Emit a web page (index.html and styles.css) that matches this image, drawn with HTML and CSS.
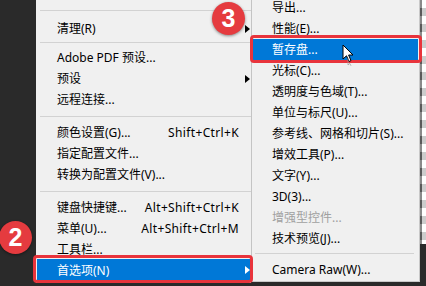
FILE: index.html
```html
<!DOCTYPE html>
<html lang="zh-CN">

<head>
    <meta charset="UTF-8">
    <meta name="viewport" content="width=device-width, initial-scale=1.0">
    <title>首选项</title>

    <link rel="stylesheet" href="styles.css">
</head>

<body>

    <div id="stage">
        <div class="gutter"></div>

        <!-- 主菜单 -->
        <div class="menu main">
            <div class="sep first"></div>
            <div class="item"><span class="label">清理(R)</span><span class="arrow"></span></div>
            <div class="sep tight"></div>
            <div class="item"><span class="label">Adobe PDF 预设...</span></div>
            <div class="item"><span class="label">预设</span><span class="arrow"></span></div>
            <div class="item"><span class="label">远程连接...</span></div>
            <div class="sep"></div>
            <div class="item"><span class="label">颜色设置(G)...</span><span class="keys">Shift+Ctrl+K</span></div>
            <div class="item"><span class="label">指定配置文件...</span></div>
            <div class="item"><span class="label">转换为配置文件(V)...</span></div>
            <div class="sep"></div>
            <div class="item"><span class="label">键盘快捷键...</span><span class="keys">Alt+Shift+Ctrl+K</span></div>
            <div class="item"><span class="label">菜单(U)...</span><span class="keys">Alt+Shift+Ctrl+M</span></div>
            <div class="item"><span class="label">工具栏...</span></div>
            <div class="item active"><span class="label">首选项(N)</span><span class="arrow"></span></div>
        </div>

        <!-- 子菜单 -->
        <div class="menu sub">
            <div class="item"><span class="label">导出...</span></div>
            <div class="item"><span class="label">性能(E)...</span></div>
            <div class="item active"><span class="label">暂存盘...</span></div>
            <div class="item"><span class="label">光标(C)...</span></div>
            <div class="item"><span class="label">透明度与色域(T)...</span></div>
            <div class="item"><span class="label">单位与标尺(U)...</span></div>
            <div class="item"><span class="label">参考线、网格和切片(S)...</span></div>
            <div class="item"><span class="label">增效工具(P)...</span></div>
            <div class="item"><span class="label">文字(Y)...</span></div>
            <div class="item"><span class="label">3D(3)...</span></div>
            <div class="item disabled"><span class="label">增强型控件...</span></div>
            <div class="item"><span class="label">技术预览(J)...</span></div>
            <div class="sep"></div>
            <div class="item"><span class="label">Camera Raw(W)...</span></div>
        </div>

        <div class="edge">
            <div class="shadow"></div>
            <div class="checker"></div>
        </div>

        <!-- 标注 -->
        <div class="mark mark-main"></div>
        <div class="mark mark-sub"></div>
        <div class="badge badge-2">2</div>
        <div class="badge badge-3">3</div>

        <svg class="cursor" width="14" height="22" viewBox="0 0 14 22">
            <path d="M1 1 L1 15 L4.5 11.8 L7 17.5 L9 16.6 L6.6 11 L11 11 Z" fill="#fff" stroke="#000" stroke-width="1" stroke-linejoin="round" />
            <path d="M6 14 L6 21 L7.8 19.4 L9 21.8" fill="none" stroke="#9a9a9a" stroke-width="1" opacity="0.7" />
        </svg>
    </div>

</body>

</html>
```

FILE: styles.css
```css
body {
    margin: 0;
    width: 426px;
    height: 286px;
    overflow: hidden;
    background: #2a2a2a;
    font-family: "Noto Sans", "Noto Sans CJK SC", sans-serif;
    font-size: 12px;
    color: #000;
}

#stage {
    position: relative;
    display: flex;
    align-items: flex-start;
    height: 286px;
}

.gutter {
    width: 36px;
    flex-shrink: 0;
}

.menu {
    background: #f0f0f0;
    flex-shrink: 0;
}

.main {
    width: 214px;
    height: 283px;
    padding-left: 1px;
}

.sub {
    width: 165px;
    margin-top: -3px;
    padding: 0 1px 1px;
    border-left: 1px solid #c4c4c4;
    border-right: 1px solid #c8c8c8;
    border-bottom: 1px solid #c8c8c8;
}

.item {
    display: flex;
    align-items: center;
    height: 21px;
    line-height: 21px;
    white-space: nowrap;
}

.main .item {
    padding-left: 20px;
}

.sub .item {
    padding-left: 19px;
}

.label {
    flex: 1;
}

.keys {
    padding-right: 12px;
    letter-spacing: 0.35px;
}

.arrow {
    width: 0;
    height: 0;
    margin-right: 1px;
    border-left: 5px solid #000;
    border-top: 4px solid transparent;
    border-bottom: 4px solid transparent;
}

.item.active {
    background: #0078d7;
    color: #fff;
}

.item.active .arrow {
    border-left-color: #fff;
}

.main .item.active {
    height: 22px;
    margin-top: -1px;
}

.item.disabled {
    color: #a0a0a0;
}

.sep {
    height: 1px;
    background: #d2d2d2;
    margin: 6px 0 5px 3px;
}

.sep.first {
    margin: 10px 0 7px 3px;
}

.sep.tight {
    margin: 3px 0 4px 3px;
}

.sub .sep {
    margin: 4px 4px 5px 2px;
}

.edge {
    width: 6px;
    height: 244px;
    display: flex;
    flex-shrink: 0;
}

.shadow {
    width: 2px;
    background: repeating-linear-gradient(#8a8a8a 0 8px, #5a5a5a 8px 16px);
}

.checker {
    flex: 1;
    background: repeating-linear-gradient(#ffffff 0 8px, #cccccc 8px 16px);
}

.mark {
    position: absolute;
    border: 3px solid #e8343c;
    border-radius: 4px;
}

.mark-main {
    left: 33px;
    top: 255px;
    width: 214px;
    height: 22px;
}

.mark-sub {
    left: 250px;
    top: 35px;
    width: 166px;
    height: 22px;
}

.badge {
    position: absolute;
    width: 33px;
    height: 33px;
    border-radius: 50%;
    background: #e53b3f;
    color: #fff;
    font-family: "Liberation Sans", Arial, sans-serif;
    font-weight: bold;
    font-size: 25px;
    line-height: 33px;
    text-align: center;
    box-shadow: 0 1px 3px rgba(0, 0, 0, 0.45);
}

.badge-2 {
    left: -1px;
    top: 221px;
}

.badge-3 {
    left: 212px;
    top: 2px;
}

.cursor {
    position: absolute;
    left: 342px;
    top: 44px;
}
```
